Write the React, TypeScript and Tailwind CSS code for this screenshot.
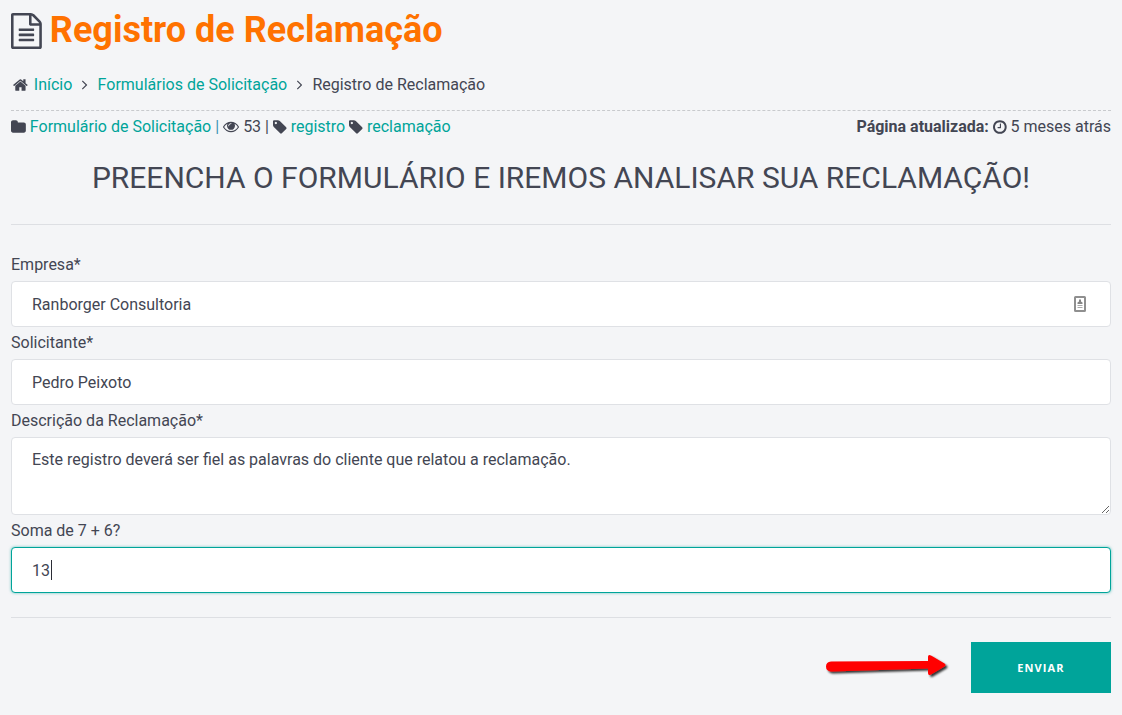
import type { ReactNode } from "react";

const icons = {
  file: {
    box: "128 0 1536 1792",
    d: "M1596 380q28 28 48 76t20 88v1152q0 40-28 68t-68 28h-1344q-40 0-68-28t-28-68v-1600q0-40 28-68t68-28h896q40 0 88 20t76 48zm-444-244v376h376q-10-29-22-41l-313-313q-12-12-41-22zm384 1528v-1024h-416q-40 0-68-28t-28-68v-416h-768v1536h1280zm-1024-864q0-14 9-23t23-9h704q14 0 23 9t9 23v64q0 14-9 23t-23 9h-704q-14 0-23-9t-9-23v-64zm736 224q14 0 23 9t9 23v64q0 14-9 23t-23 9h-704q-14 0-23-9t-9-23v-64q0-14 9-23t23-9h704zm0 256q14 0 23 9t9 23v64q0 14-9 23t-23 9h-704q-14 0-23-9t-9-23v-64q0-14 9-23t23-9h704z",
  },
  home: {
    box: "64 0 1664 1792",
    d: "M1472 992v480q0 26-19 45t-45 19h-384v-384h-256v384h-384q-26 0-45-19t-19-45v-480q0-1 .5-3t.5-3l575-474 575 474q1 2 1 6zm223-69l-62 74q-8 9-21 11h-3q-13 0-21-7l-692-577-692 577q-12 8-24 7-13-2-21-11l-62-74q-8-10-7-23.5t11-21.5l719-599q32-26 76-26t76 26l244 204v-195q0-14 9-23t23-9h192q14 0 23 9t9 23v408l219 182q10 8 11 21.5t-7 23.5z",
  },
  angle: {
    box: "589 64 582 1792",
    d: "M1171 960q0 13-10 23l-466 466q-10 10-23 10t-23-10l-50-50q-10-10-10-23t10-23l393-393-393-393q-10-10-10-23t10-23l50-50q10-10 23-10t23 10l466 466q10 10 10 23z",
  },
  folder: {
    box: "64 0 1664 1792",
    d: "M1728 608v704q0 92-66 158t-158 66h-1216q-92 0-158-66t-66-158v-960q0-92 66-158t158-66h320q92 0 158 66t66 158v32h672q92 0 158 66t66 158z",
  },
  eye: {
    box: "0 64 1792 1792",
    d: "M1664 960q-152-236-381-353 61 104 61 225 0 185-131.5 316.5t-316.5 131.5-316.5-131.5-131.5-316.5q0-121 61-225-229 117-381 353 133 205 333.5 326.5t434.5 121.5 434.5-121.5 333.5-326.5zm-720-384q0-20-14-34t-34-14q-125 0-214.5 89.5t-89.5 214.5q0 20 14 34t34 14 34-14 14-34q0-86 61-147t147-61q20 0 34-14t14-34zm848 384q0 34-20 69-140 230-376.5 368.5t-499.5 138.5-499.5-139-376.5-368q-20-35-20-69t20-69q140-229 376.5-368t499.5-139 499.5 139 376.5 368q20 35 20 69z",
  },
  tag: {
    box: "128 0 1536 1792",
    d: "M576 448q0-53-37.5-90.5t-90.5-37.5-90.5 37.5-37.5 90.5 37.5 90.5 90.5 37.5 90.5-37.5 37.5-90.5zm1067 576q0 53-37 90l-491 492q-39 37-91 37-53 0-90-37l-715-716q-38-37-64.5-101t-26.5-117v-416q0-52 38-90t90-38h416q53 0 117 26.5t102 64.5l715 714q37 39 37 91z",
  },
  clock: {
    box: "128 0 1536 1792",
    d: "M1024 544v448q0 14-9 23t-23 9h-320q-14 0-23-9t-9-23v-64q0-14 9-23t23-9h224v-352q0-14 9-23t23-9h64q14 0 23 9t9 23zm416 352q0-148-73-273t-198-198-273-73-273 73-198 198-73 273 73 273 198 198 273 73 273-73 198-198 73-273zm224 0q0 209-103 385.5t-279.5 279.5-385.5 103-385.5-103-279.5-279.5-103-385.5 103-385.5 279.5-279.5 385.5-103 385.5 103 279.5 279.5 103 385.5z",
  },
};

function Icon({ name, className = "h-4" }: { name: keyof typeof icons; className?: string }) {
  return (
    <svg viewBox={icons[name].box} fill="currentColor" aria-hidden="true" className={`w-auto shrink-0 ${className}`}>
      <path d={icons[name].d} />
    </svg>
  );
}

function TextLink({ children }: { children: ReactNode }) {
  return (
    <a href="#" className="text-[#00a49a] hover:underline">
      {children}
    </a>
  );
}

function Field({ id, label, children }: { id: string; label: string; children: ReactNode }) {
  return (
    <div>
      <label htmlFor={id} className="block leading-8">
        {label}
      </label>
      <div className="relative flex">{children}</div>
    </div>
  );
}

const control =
  "block w-full rounded border bg-white px-5 text-base leading-5 text-[#434653] outline-none";

export default function App() {
  return (
    <main className="min-h-screen bg-[#f4f5f7] px-[11px] pt-2 pb-[22px] font-['Roboto',sans-serif] text-base leading-6 text-[#434653]">
      <h1 className="flex h-[45px] items-center gap-2 text-4xl leading-[45px] font-bold text-[#ff7200]">
        <Icon name="file" className="h-9 text-[#434653]" />
        Registro de Reclamação
      </h1>

      <nav aria-label="Trilha" className="mt-5 flex h-[38px] items-start border-b border-dashed border-[#c8cacd]">
        <ol className="flex items-center pl-[2px]">
          <li className="flex items-center gap-[6px]">
            <Icon name="home" />
            <TextLink>Início</TextLink>
          </li>
          <li className="flex items-center">
            <Icon name="angle" className="mx-[10px] h-4" />
            <TextLink>Formulários de Solicitação</TextLink>
          </li>
          <li className="flex items-center">
            <Icon name="angle" className="mx-[10px] h-4" />
            Registro de Reclamação
          </li>
        </ol>
      </nav>

      <div className="mt-1 flex flex-wrap items-center justify-between">
        <div className="flex items-center gap-1">
          <Icon name="folder" />
          <TextLink>Formulário de Solicitação</TextLink>
          <span className="text-[#3f93b5]">|</span>
          <Icon name="eye" />
          <span>53</span>
          <span>|</span>
          <Icon name="tag" />
          <TextLink>registro</TextLink>
          <Icon name="tag" />
          <TextLink>reclamação</TextLink>
        </div>
        <div className="flex items-center gap-1">
          <strong className="font-bold">Página atualizada:</strong>
          <Icon name="clock" />
          <span>5 meses atrás</span>
        </div>
      </div>

      <h2 className="mt-[21px] text-center text-3xl leading-9">
        PREENCHA O FORMULÁRIO E IREMOS ANALISAR SUA RECLAMAÇÃO!
      </h2>

      <form className="mt-7" onSubmit={(e) => e.preventDefault()}>
        <hr className="mb-6 border-[#dddfe3]" />

        <Field id="empresa" label="Empresa*">
          <input id="empresa" type="text" defaultValue="Ranborger Consultoria" className={`${control} h-[46px] border-[#dfe1e5]`} />
          <svg viewBox="0 0 12 16" aria-hidden="true" className="absolute top-[15px] right-[25px] h-4 w-3">
            <rect x="1" y="1" width="10" height="14" rx="0.5" fill="#fff" stroke="#8f8f8f" strokeWidth="2" />
            <path d="M5 3.5h2v2l1.5 1v1.5h-5V6.500l1.5-1z" fill="#858585" />
            <path d="M3.500 9.500h5M3.500 11.500h5" stroke="#aaa" />
          </svg>
        </Field>

        <Field id="solicitante" label="Solicitante*">
          <input id="solicitante" type="text" defaultValue="Pedro Peixoto" className={`${control} h-[46px] border-[#dfe1e5]`} />
        </Field>

        <Field id="descricao" label="Descrição da Reclamação*">
          <textarea
            id="descricao"
            defaultValue="Este registro deverá ser fiel as palavras do cliente que relatou a reclamação."
            className={`${control} h-[78px] resize-y border-[#dfe1e5] py-3`}
          />
        </Field>

        <Field id="soma" label="Soma de 7 + 6?">
          <input
            id="soma"
            type="text"
            defaultValue="13"
            className={`${control} h-[46px] border-[#00a49a] shadow-[0_0_3px_rgba(0,164,154,0.6)]`}
          />
          <span aria-hidden="true" className="absolute top-[13px] left-10 h-5 w-px bg-[#2b2d36]" />
        </Field>

        <hr className="my-6 border-[#dddfe3]" />

        <div className="flex items-start justify-end gap-5">
          <svg viewBox="0 0 128 30" aria-hidden="true" className="mt-2 h-[30px] w-32">
            <defs>
              <filter id="shade" x="-10%" y="-30%" width="120%" height="180%">
                <feDropShadow dx="2" dy="2" stdDeviation="1.300" floodColor="#000" floodOpacity="0.8" />
              </filter>
            </defs>
            <path
              filter="url(#shade)"
              fill="#f00"
              d="M8 11.500L105 11V7q0-3 3-1.500L121.500 13.500q2 1.500 0 3L108 24.500q-3 1.500-3-1.500V18.500L8 21.500q-5-.5-5-5t5-5z"
            />
          </svg>
          <button
            type="submit"
            className="h-[51px] w-[140px] bg-[#00a49a] font-['Open_Sans',sans-serif] text-[11px] font-bold tracking-widest text-white"
          >
            ENVIAR
          </button>
        </div>
      </form>
    </main>
  );
}
